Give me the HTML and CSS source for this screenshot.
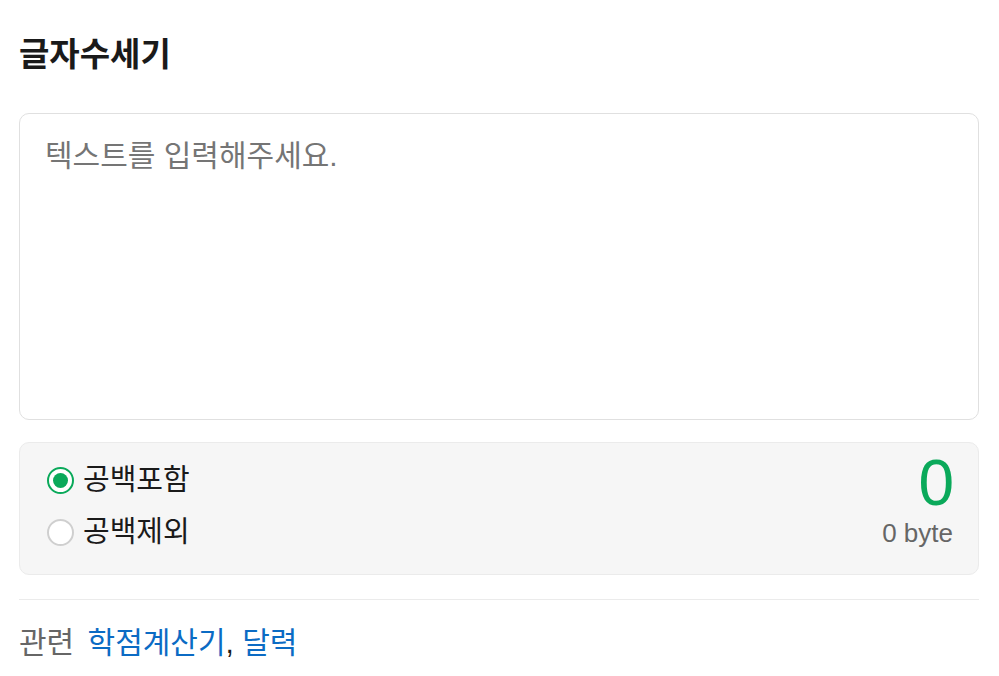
FILE: index.html
```html
<!DOCTYPE html>
<html lang="ko">
<head>
<meta charset="utf-8">
<title>글자수세기</title>
<link rel="stylesheet" href="styles.css">
</head>
<body>
<main class="page">
  <h1 class="title">글자수세기</h1>
  <textarea class="input" placeholder="텍스트를 입력해주세요."></textarea>
  <section class="stats">
    <div class="options">
      <label class="option"><span class="radio checked"></span><span>공백포함</span></label>
      <label class="option"><span class="radio"></span><span>공백제외</span></label>
    </div>
    <div class="result">
      <div class="count">0</div>
      <div class="bytes">0 byte</div>
    </div>
  </section>
  <hr class="divider">
  <p class="related"><span class="related-label">관련</span> <a href="#" class="link">학점계산기</a>, <a href="#" class="link">달력</a></p>
</main>
</body>
</html>
```
FILE: styles.css
```css
* { box-sizing: border-box; }
html, body { margin: 0; padding: 0; background: #fff; }
body {
  font-family: "Liberation Sans", Arial, "Noto Sans CJK KR", sans-serif;
  color: #222;
}
.page {
  padding: 0 20px 0 19px;
  display: flex;
  flex-direction: column;
}
.title {
  margin: 33px 0 0 0;
  font-size: 33px;
  line-height: 44px;
  font-weight: 700;
  color: #1a1a1a;
}
.input {
  margin-top: 36px;
  width: 100%;
  height: 307px;
  border: 1px solid #e0e0e0;
  border-radius: 10px;
  padding: 22px 25px;
  font-family: inherit;
  font-size: 30px;
  line-height: 40px;
  color: #222;
  resize: none;
  outline: none;
}
.input::placeholder { color: #757575; }
.stats {
  margin-top: 22px;
  background: #f6f6f6;
  border: 1px solid #ebebeb;
  border-radius: 10px;
  padding: 0 25px 0 27px;
  display: flex;
  justify-content: space-between;
  align-items: flex-start;
}
.options {
  display: flex;
  flex-direction: column;
  padding: 19px 0 24px 0;
  gap: 16px;
}
.option {
  display: flex;
  align-items: center;
  gap: 9px;
  font-size: 29px;
  line-height: 36px;
  color: #1a1a1a;
}
.radio {
  width: 27px;
  height: 27px;
  border-radius: 50%;
  border: 2px solid #cfcfcf;
  background: #fff;
  display: flex;
  align-items: center;
  justify-content: center;
}
.radio.checked { border-color: #0aa95a; }
.radio.checked::after {
  content: "";
  width: 15px;
  height: 15px;
  border-radius: 50%;
  background: #0aa95a;
}
.result {
  display: flex;
  flex-direction: column;
  align-items: flex-end;
  padding-top: 8px;
}
.count {
  font-size: 64px;
  line-height: 64px;
  color: #0aa95a;
  margin-right: -1px;
}
.bytes {
  font-size: 26px;
  line-height: 34px;
  color: #666;
  margin-top: 1px;
}
.divider {
  margin: 24px 0 0 0;
  border: 0;
  border-top: 1px solid #ebebeb;
}
.related {
  margin: 23px 0 0 0;
  font-size: 30px;
  line-height: 40px;
  color: #1a1a1a;
}
.related-label { color: #666; margin-right: 5px; }
.link { color: #0b6bc4; text-decoration: none; }
```
